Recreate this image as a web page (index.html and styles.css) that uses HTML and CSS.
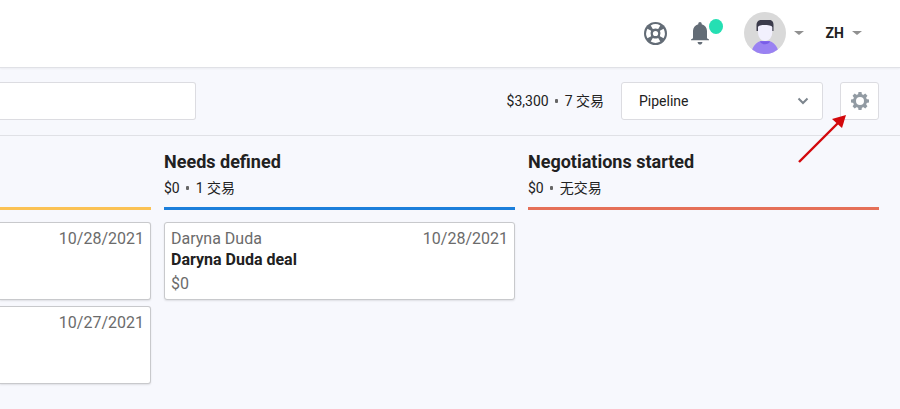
FILE: index.html
```html
<!DOCTYPE html>
<html lang="zh">
<head>
<meta charset="utf-8">
<meta name="viewport" content="width=device-width, initial-scale=1">
<title>Pipeline</title>
<link rel="stylesheet" href="styles.css">
</head>
<body>
<header class="topbar">
  <button class="icon-button help" type="button" aria-label="Help">
    <svg width="23" height="23" viewBox="0 0 24 24">
      <circle cx="12" cy="12" r="12" fill="currentColor"/>
      <g fill="#fff">
        <path id="gap" d="M7 3.600Q12 .8 17 3.600L14.800 7.400Q12 6 9.200 7.400z"/>
        <use href="#gap" transform="rotate(90 12 12)"/>
        <use href="#gap" transform="rotate(180 12 12)"/>
        <use href="#gap" transform="rotate(270 12 12)"/>
        <circle cx="12" cy="12" r="2.700"/>
      </g>
    </svg>
  </button>
  <button class="icon-button bell" type="button" aria-label="Notifications">
    <svg width="18" height="23" viewBox="0 0 18 23">
      <path d="M9 0c1 0 1.700.8 1.700 1.700v.5C14 3 16 5.700 16 9v7.200l2 1.300v.7H0v-.7l2-1.300V9c0-3.300 2-6 5.300-6.800v-.5C7.300.8 8 0 9 0zM6.600 20h4.800c0 1.500-1 2.600-2.400 2.600S6.600 21.500 6.600 20z" fill="currentColor"/>
    </svg>
    <span class="badge"></span>
  </button>
  <button class="menu-button account" type="button" aria-label="Account">
    <svg width="42" height="42" viewBox="0 0 42 42">
      <defs><clipPath id="face"><circle cx="21" cy="21" r="21"/></clipPath></defs>
      <g clip-path="url(#face)">
        <path d="M0 0h42v42H0z" fill="#d9d9d9"/>
        <path d="M7 42c1-7 5-12 10-13h8c5 1 9 6 10 13z" fill="#9a82f2"/>
        <path d="M16 29.300c1 4 9 4 10 0z" fill="#7a5de8"/>
        <path d="M12.500 19v-6c0-2.700 1.700-5 4.500-5h8.500c2.800 0 4 2.300 4 5v6z" fill="#3b3b4b"/>
        <path d="M14 15.500c0-1.500 2-2.500 7-2.500s7.300 1 7.300 2.500V20c0 5-3.200 9-7.300 9s-7-4-7-9z" fill="#f2f0fd"/>
      </g>
    </svg>
    <span class="caret"></span>
  </button>
  <button class="menu-button language" type="button">ZH<span class="caret"></span></button>
</header>

<section class="toolbar">
  <input class="search" type="text" aria-label="Search">
  <p class="total">$3,300 <i class="dot"></i> 7 交易</p>
  <div class="picker">
    <select aria-label="Pipeline"><option>Pipeline</option></select>
    <svg class="chevron" width="12" height="8" viewBox="0 0 12 8"><path d="M1.500 1.500 6 6l4.500-4.500" fill="none" stroke="currentColor" stroke-width="2"/></svg>
  </div>
  <div class="settings">
    <button type="button" aria-label="Settings">
      <svg width="20" height="20" viewBox="-10 -10 20 20">
        <g fill="currentColor">
          <path id="tooth" d="M-2-6-1.500-9h3L2-6z"/>
          <use href="#tooth" transform="rotate(45)"/>
          <use href="#tooth" transform="rotate(90)"/>
          <use href="#tooth" transform="rotate(135)"/>
          <use href="#tooth" transform="rotate(180)"/>
          <use href="#tooth" transform="rotate(225)"/>
          <use href="#tooth" transform="rotate(270)"/>
          <use href="#tooth" transform="rotate(315)"/>
        </g>
        <circle r="5.500" fill="none" stroke="currentColor" stroke-width="3"/>
      </svg>
    </button>
    <svg class="pointer" width="50" height="50" viewBox="0 0 50 50">
      <path d="M2 48 41 9" stroke="#d3080c" stroke-width="2.400"/>
      <path d="M49 1 35 5l10 9z" fill="#d3080c"/>
    </svg>
  </div>
</section>

<main class="board">
  <section class="stage yellow">
    <header></header>
    <article class="card"><div class="row"><time>10/28/2021</time></div></article>
    <article class="card"><div class="row"><time>10/27/2021</time></div></article>
  </section>
  <section class="stage blue">
    <header>
      <h2>Needs defined</h2>
      <p>$0 <i class="dot"></i> 1 交易</p>
    </header>
    <article class="card">
      <div class="row"><span>Daryna Duda</span><time>10/28/2021</time></div>
      <h3>Daryna Duda deal</h3>
      <p>$0</p>
    </article>
  </section>
  <section class="stage red">
    <header>
      <h2>Negotiations started</h2>
      <p>$0 <i class="dot"></i> 无交易</p>
    </header>
  </section>
</main>
</body>
</html>
```
FILE: styles.css
```css
* {
  box-sizing: border-box;
}

body {
  margin: 0;
  background: #f7f8fd;
  color: #212121;
  font: 14px/20px Roboto, "Noto Sans CJK SC", sans-serif;
}

h2, h3, p {
  margin: 0;
}

button {
  padding: 0;
  border: 0;
  background: none;
  color: inherit;
  font: inherit;
}

svg {
  display: block;
}

.topbar {
  display: flex;
  align-items: center;
  justify-content: flex-end;
  height: 68px;
  padding: 0 38px 1px 0;
  border-bottom: 1px solid #e0e1e6;
  background: #fff;
  box-shadow: 0 1px 2px #0000000d;
}

.icon-button {
  position: relative;
  color: #636c76;
}

.help {
  margin-right: 24px;
}

.bell {
  margin-right: 35px;
}

.badge {
  position: absolute;
  top: -3px;
  right: -14px;
  width: 14px;
  height: 15px;
  border-radius: 50%;
  background: #25dfb3;
}

.menu-button {
  display: flex;
  align-items: center;
  gap: 8px;
}

.account {
  margin-right: 22px;
}

.language {
  font-weight: 700;
}

.caret {
  border: solid transparent;
  border-width: 4px 5px 0;
  border-top-color: #909090;
}

.toolbar {
  display: flex;
  align-items: center;
  gap: 17px;
  padding: 14px 21px 15px 0;
  border-bottom: 1px solid #e0e1e6;
}

.search,
.picker select,
.settings button {
  height: 38px;
  border: 1px solid #dcdce1;
  border-radius: 3px;
  background: #fff;
}

.search {
  width: 196px;
  margin-right: auto;
  padding: 0 16px;
  border-left: 0;
  border-radius: 0 3px 3px 0;
}

.dot {
  display: inline-block;
  width: 3px;
  height: 4px;
  margin: 0 3px;
  border-radius: 1px;
  background: #666;
  vertical-align: 3px;
}

.picker,
.settings {
  position: relative;
}

.picker select {
  display: block;
  width: 202px;
  padding: 0 17px;
  appearance: none;
  color: inherit;
  font: inherit;
}

.chevron {
  position: absolute;
  top: 15px;
  right: 14px;
  color: #7c858d;
  pointer-events: none;
}

.settings button {
  display: grid;
  place-items: center;
  width: 39px;
  color: #929ba3;
}

.pointer {
  position: absolute;
  top: 32px;
  right: 32px;
  pointer-events: none;
}

.board {
  display: grid;
  grid-template-columns: 151fr 351fr 351fr;
  gap: 13px;
  padding: 14px 21px 24px 0;
}

.stage > header {
  height: 60px;
  margin-bottom: 12px;
  border-bottom: 3px solid;
}

.yellow > header {
  border-color: #fbc254;
}

.blue > header {
  border-color: #1c7fdb;
}

.red > header {
  border-color: #e57058;
}

.stage h2 {
  margin-bottom: 4px;
  font-size: 18px;
  font-weight: 700;
  line-height: 24px;
}

.card {
  min-height: 78px;
  margin-bottom: 6px;
  padding: 5px 6px 4px;
  border: 1px solid #c8c9cc;
  border-radius: 3px;
  background: #fff;
  box-shadow: 0 1px 2px #0000001a;
  color: #6b6b6b;
  font-size: 16px;
  line-height: 22px;
}

.yellow .card {
  border-left: 0;
  border-radius: 0 3px 3px 0;
}

.row {
  display: flex;
}

.row time {
  margin-left: auto;
}

.card h3 {
  margin-bottom: 3px;
  color: #212121;
  font-size: 16px;
  font-weight: 700;
  line-height: 20px;
}
```
